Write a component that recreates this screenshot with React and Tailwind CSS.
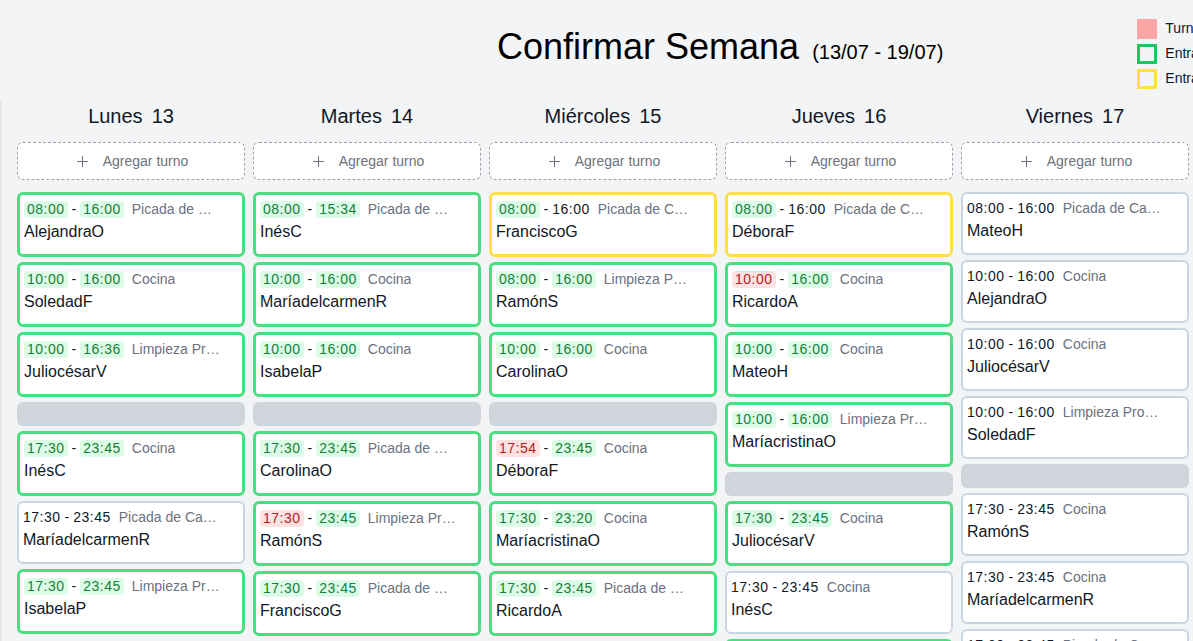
import React from "react";
import { Plus } from "lucide-react";

// g = green badge, r = red badge, null = plain text
const sh = (b, s, sc, e, ec, role, name) => ({ b, s, sc, e, ec, role, name });

const PIC = "Picada de Carne";
const LIM = "Limpieza Profunda";
const PAT = "Limpieza Patio";
const COC = "Cocina";

const columns = [
  {
    day: "Lunes",
    num: 13,
    morning: [
      sh("g", "08:00", "g", "16:00", "g", PIC, "AlejandraO"),
      sh("g", "10:00", "g", "16:00", "g", COC, "SoledadF"),
      sh("g", "10:00", "g", "16:36", "g", LIM, "JuliocésarV"),
    ],
    evening: [
      sh("g", "17:30", "g", "23:45", "g", COC, "InésC"),
      sh("n", "17:30", null, "23:45", null, PIC, "MaríadelcarmenR"),
      sh("g", "17:30", "g", "23:45", "g", LIM, "IsabelaP"),
    ],
  },
  {
    day: "Martes",
    num: 14,
    morning: [
      sh("g", "08:00", "g", "15:34", "g", PIC, "InésC"),
      sh("g", "10:00", "g", "16:00", "g", COC, "MaríadelcarmenR"),
      sh("g", "10:00", "g", "16:00", "g", COC, "IsabelaP"),
    ],
    evening: [
      sh("g", "17:30", "g", "23:45", "g", PIC, "CarolinaO"),
      sh("g", "17:30", "r", "23:45", "g", LIM, "RamónS"),
      sh("g", "17:30", "g", "23:45", "g", PIC, "FranciscoG"),
    ],
  },
  {
    day: "Miércoles",
    num: 15,
    morning: [
      sh("y", "08:00", "g", "16:00", null, PIC, "FranciscoG"),
      sh("g", "08:00", "g", "16:00", "g", PAT, "RamónS"),
      sh("g", "10:00", "g", "16:00", "g", COC, "CarolinaO"),
    ],
    evening: [
      sh("g", "17:54", "r", "23:45", "g", COC, "DéboraF"),
      sh("g", "17:30", "g", "23:20", "g", COC, "MaríacristinaO"),
      sh("g", "17:30", "g", "23:45", "g", PIC, "RicardoA"),
    ],
  },
  {
    day: "Jueves",
    num: 16,
    morning: [
      sh("y", "08:00", "g", "16:00", null, PIC, "DéboraF"),
      sh("g", "10:00", "r", "16:00", "g", COC, "RicardoA"),
      sh("g", "10:00", "g", "16:00", "g", COC, "MateoH"),
      sh("g", "10:00", "g", "16:00", "g", LIM, "MaríacristinaO"),
    ],
    evening: [
      sh("g", "17:30", "g", "23:45", "g", COC, "JuliocésarV"),
      sh("n", "17:30", null, "23:45", null, COC, "InésC"),
      sh("g", "17:30", "g", "23:45", "g", PIC, "SoledadF"),
    ],
  },
  {
    day: "Viernes",
    num: 17,
    morning: [
      sh("n", "08:00", null, "16:00", null, PIC, "MateoH"),
      sh("n", "10:00", null, "16:00", null, COC, "AlejandraO"),
      sh("n", "10:00", null, "16:00", null, COC, "JuliocésarV"),
      sh("n", "10:00", null, "16:00", null, LIM, "SoledadF"),
    ],
    evening: [
      sh("n", "17:30", null, "23:45", null, COC, "RamónS"),
      sh("n", "17:30", null, "23:45", null, COC, "MaríadelcarmenR"),
      sh("n", "17:30", null, "23:45", null, PIC, "CarolinaO"),
    ],
  },
  {
    day: "Sábado",
    num: 18,
    morning: [
      sh("n", "08:00", null, "16:00", null, PIC, "IsabelaP"),
      sh("n", "10:00", null, "16:00", null, COC, "RicardoA"),
    ],
    evening: [sh("n", "17:30", null, "23:45", null, COC, "MateoH")],
  },
  {
    day: "Domingo",
    num: 19,
    morning: [sh("n", "08:00", null, "16:00", null, PIC, "InésC")],
    evening: [sh("n", "17:30", null, "23:45", null, COC, "FranciscoG")],
  },
];

function Time({ t, c }) {
  if (c === "g")
    return (
      <span className="rounded-[4px] bg-[#dcfce7] px-[3px] tracking-[0.5px] text-[#15803d]">
        {t}
      </span>
    );
  if (c === "r")
    return (
      <span className="rounded-[4px] bg-[#fee2e2] px-[3px] tracking-[0.5px] text-[#b91c1c]">
        {t}
      </span>
    );
  return <span className="tracking-[0.5px] text-[#111827]">{t}</span>;
}

function Card({ c }) {
  const box =
    c.b === "g"
      ? "h-[65px] border-[3px] border-[#4ade80] pt-[6px] pr-[21px]"
      : c.b === "y"
      ? "h-[65px] border-[3px] border-[#fde047] pt-[6px] pr-[21px]"
      : "h-[63px] border-2 border-[#cbd5e1] pt-[6px] pr-[26px]";
  return (
    <div className={`${box} rounded-md bg-white pl-[4px]`}>
      <div className="flex items-center whitespace-nowrap text-[14px] leading-[17px]">
        <Time t={c.s} c={c.sc} />
        <span className="mx-[4px] text-[#111827]">-</span>
        <Time t={c.e} c={c.ec} />
        <span className="ml-[8px] min-w-0 truncate text-[#6b7280]">{c.role}</span>
      </div>
      <div className="mt-[3px] text-[16px] leading-[22px] text-[#111827]">{c.name}</div>
    </div>
  );
}

function Column({ col }) {
  return (
    <div className="flex w-[228px] shrink-0 flex-col">
      <div className="flex h-8 items-center justify-center gap-[9px] text-[20px] text-[#111827]">
        <span>{col.day}</span>
        <span>{col.num}</span>
      </div>
      <button className="mt-[10px] flex h-[38px] items-center justify-center gap-3 rounded-md border border-dashed border-[#9ca3af] bg-white text-[14px] text-[#6b7280]">
        <Plus size={17} strokeWidth={1.5} />
        <span>Agregar turno</span>
      </button>
      <div className="mt-3 flex flex-col gap-[5px]">
        {col.morning.map((c, i) => (
          <Card key={"m" + i} c={c} />
        ))}
        <div className="h-6 rounded-md bg-[#d1d5db]" />
        {col.evening.map((c, i) => (
          <Card key={"e" + i} c={c} />
        ))}
      </div>
    </div>
  );
}

export default function App() {
  return (
    <div
      className="h-screen w-screen overflow-hidden bg-[#f3f4f6]"
      style={{ fontFamily: '"Liberation Sans", Arial, sans-serif' }}
    >
      <div className="w-max">
        <div className="flex h-[100px] items-start pt-[18px]">
          <div className="ml-[497px] mt-[9px] flex items-baseline gap-[13px] text-black">
            <h1 className="text-[36px] leading-[40px]">Confirmar Semana</h1>
            <span className="text-[20px]">(13/07 - 19/07)</span>
          </div>
          <div className="ml-[194px] flex flex-col gap-1 text-[14px] text-[#111827]">
            <div className="flex items-center gap-2">
              <div className="h-5 w-5 bg-[#fca5a5]" />
              <span>Turno no confirmado</span>
            </div>
            <div className="flex items-center gap-2">
              <div className="h-5 w-5 border-[3px] border-[#22c55e]" />
              <span>Entrada confirmada</span>
            </div>
            <div className="flex items-center gap-2">
              <div className="h-5 w-5 border-[3px] border-[#fde047]" />
              <span>Entrada pendiente</span>
            </div>
          </div>
        </div>
        <div className="flex gap-2 border-l-2 border-[#e5e7eb] pl-[15px] pr-4">
          {columns.map((col) => (
            <Column key={col.day} col={col} />
          ))}
        </div>
      </div>
    </div>
  );
}
